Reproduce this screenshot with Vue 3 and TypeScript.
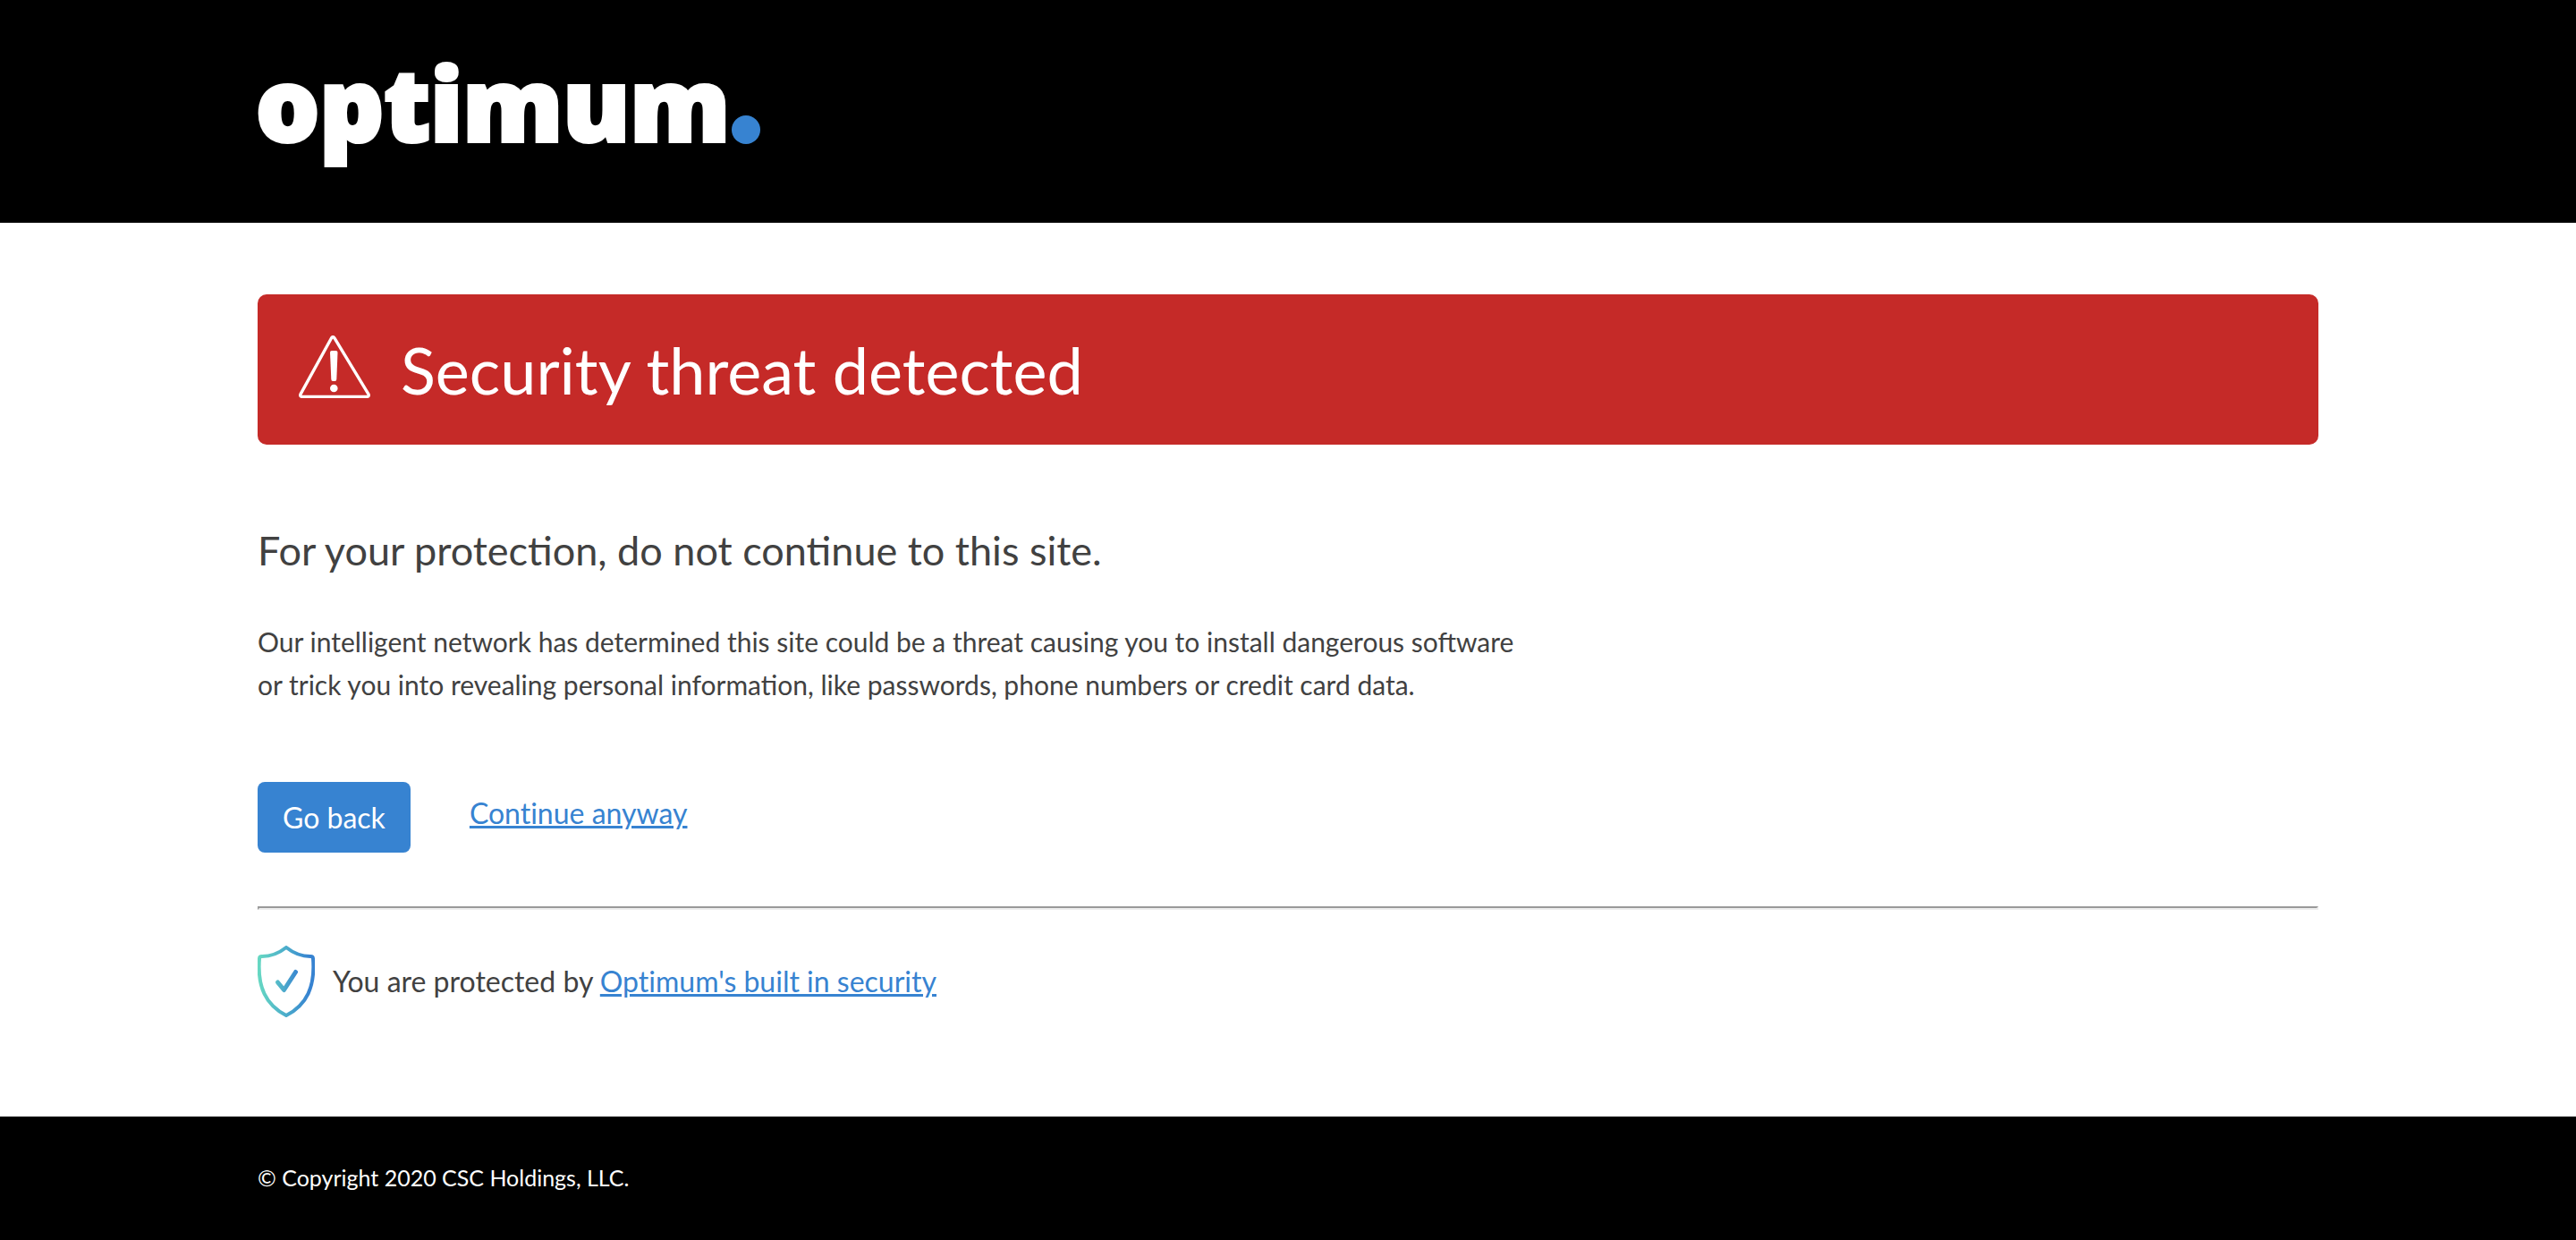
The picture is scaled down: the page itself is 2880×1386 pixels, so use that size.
<script setup lang="ts">
const title = 'Security threat detected'
const lines: string[] = [
  'Our intelligent network has determined this site could be a threat causing you to install dangerous software',
  'or trick you into revealing personal information, like passwords, phone numbers or credit card data.',
]

function goBack(): void {
  window.history.back()
}
</script>

<template>
  <div class="page">
    <header class="header">
      <svg class="logo" viewBox="0 0 564 128" role="img" aria-label="optimum.">
        <text class="wordmark" x="-2" y="112">optimum</text>
        <circle cx="546" cy="99" r="16" fill="#3783d1" />
      </svg>
    </header>

    <main class="main">
      <section class="banner">
        <svg class="warning" viewBox="0 0 80 70" aria-hidden="true">
          <path d="M36.6 2.7 Q38.2 .3 39.8 2.7 L78 65.6 Q79 68.4 76 68.4 H4 Q1 68.4 2 65.6 Z" fill="none" stroke="#fff" stroke-width="3.4" stroke-linejoin="round" />
          <path d="M35 19 Q35 17 37 17 H41.5 Q43.5 17 43.5 19 L42.3 49 Q42.2 51 40.5 51 H38 Q36.4 51 36.3 49 Z" fill="#fff" />
          <circle cx="39.3" cy="59" r="4.3" fill="#fff" />
        </svg>
        <h1 class="title">{{ title }}</h1>
      </section>

      <h2 class="subtitle">For your protection, do not continue to this site.</h2>
      <p class="text">
        <span v-for="line in lines" :key="line" class="line">{{ line }}</span>
      </p>

      <div class="actions">
        <button class="back" type="button" @click="goBack">Go back</button>
        <a class="link continue" href="#">Continue anyway</a>
      </div>

      <hr class="rule" />

      <div class="protected">
        <svg class="shield" viewBox="0 0 64 80" fill="none" aria-hidden="true">
          <defs>
            <linearGradient id="shield-outline" x1="0" y1="0" x2="64" y2="0" gradientUnits="userSpaceOnUse">
              <stop offset="0" stop-color="#67d9c2" />
              <stop offset="0.5" stop-color="#4baccb" />
              <stop offset="0.9" stop-color="#3783d1" />
            </linearGradient>
            <linearGradient id="shield-check" x1="20" y1="0" x2="46" y2="0" gradientUnits="userSpaceOnUse">
              <stop offset="0" stop-color="#58bfc8" />
              <stop offset="1" stop-color="#3783d1" />
            </linearGradient>
          </defs>
          <path d="M32 2 Q45 12.2 59.5 12 Q61.8 12 62 14.3 C64.5 46 55 66 32 78 C9 66 -.5 46 2 14.3 Q2.2 12 4.5 12 Q19 12.2 32 2 Z" stroke="url(#shield-outline)" stroke-width="4" stroke-linejoin="round" />
          <path d="M22.5 41 L29.5 49.5 L42.5 29.5" stroke="url(#shield-check)" stroke-width="5" stroke-linecap="round" stroke-linejoin="round" />
        </svg>
        <p class="note">You are protected by <a class="link" href="#">Optimum's built in security</a></p>
      </div>
    </main>

    <footer class="footer">© Copyright 2020 CSC Holdings, LLC.</footer>
  </div>
</template>

<style>
body {
  margin: 0;
  background: #fff;
}
</style>

<style scoped>
.page {
  display: flex;
  flex-direction: column;
  min-height: 100vh;
  font-family: Lato, "Liberation Sans", sans-serif;
  font-size: 32px;
  color: #414141;
}

.header {
  padding: 46px 10% 75px;
  background: #000;
}

.logo {
  display: block;
  width: 564px;
  height: 128px;
  overflow: visible;
}

.wordmark {
  font-family: "Open Sans", Lato, sans-serif;
  font-size: 112px;
  font-weight: 800;
  fill: #fff;
  stroke: #fff;
  stroke-width: 4px;
}

.main {
  flex: 1;
  padding: 80px 10% 111px;
}

.banner {
  display: flex;
  align-items: center;
  gap: 34px;
  padding: 34px 46px;
  border-radius: 10px;
  background: #c52a28;
  color: #fff;
}

.warning {
  flex: none;
  width: 80px;
  height: 70px;
  margin-bottom: 6px;
}

.title {
  margin: 0;
  font-size: 72px;
  font-weight: 400;
  line-height: 100px;
}

.subtitle {
  margin: 88px 0 48px;
  font-size: 45px;
  font-weight: 400;
  line-height: 60px;
}

.text {
  margin: 0;
  font-size: 30px;
  line-height: 48px;
}

.line {
  display: block;
}

.actions {
  display: flex;
  align-items: flex-start;
  gap: 66px;
  margin-top: 85px;
}

.back {
  height: 79px;
  padding: 0 28px;
  border: 0;
  border-radius: 8px;
  background: #3783d1;
  color: #fff;
  font: inherit;
  cursor: pointer;
}

.link {
  color: #3783d1;
  font-variant-ligatures: none;
  text-decoration: underline;
}

.continue {
  line-height: 70px;
}

.rule {
  margin: 60px 0 40px;
  border: 2px solid;
  border-color: #9a9a9a #eee #eee #9a9a9a;
}

.protected {
  display: flex;
  align-items: center;
  gap: 20px;
}

.shield {
  flex: none;
  width: 64px;
  height: 80px;
}

.note {
  margin: 0;
  line-height: 48px;
}

.footer {
  padding: 52px 10% 54px;
  background: #000;
  color: #fff;
  font-size: 25px;
  line-height: 32px;
}
</style>
